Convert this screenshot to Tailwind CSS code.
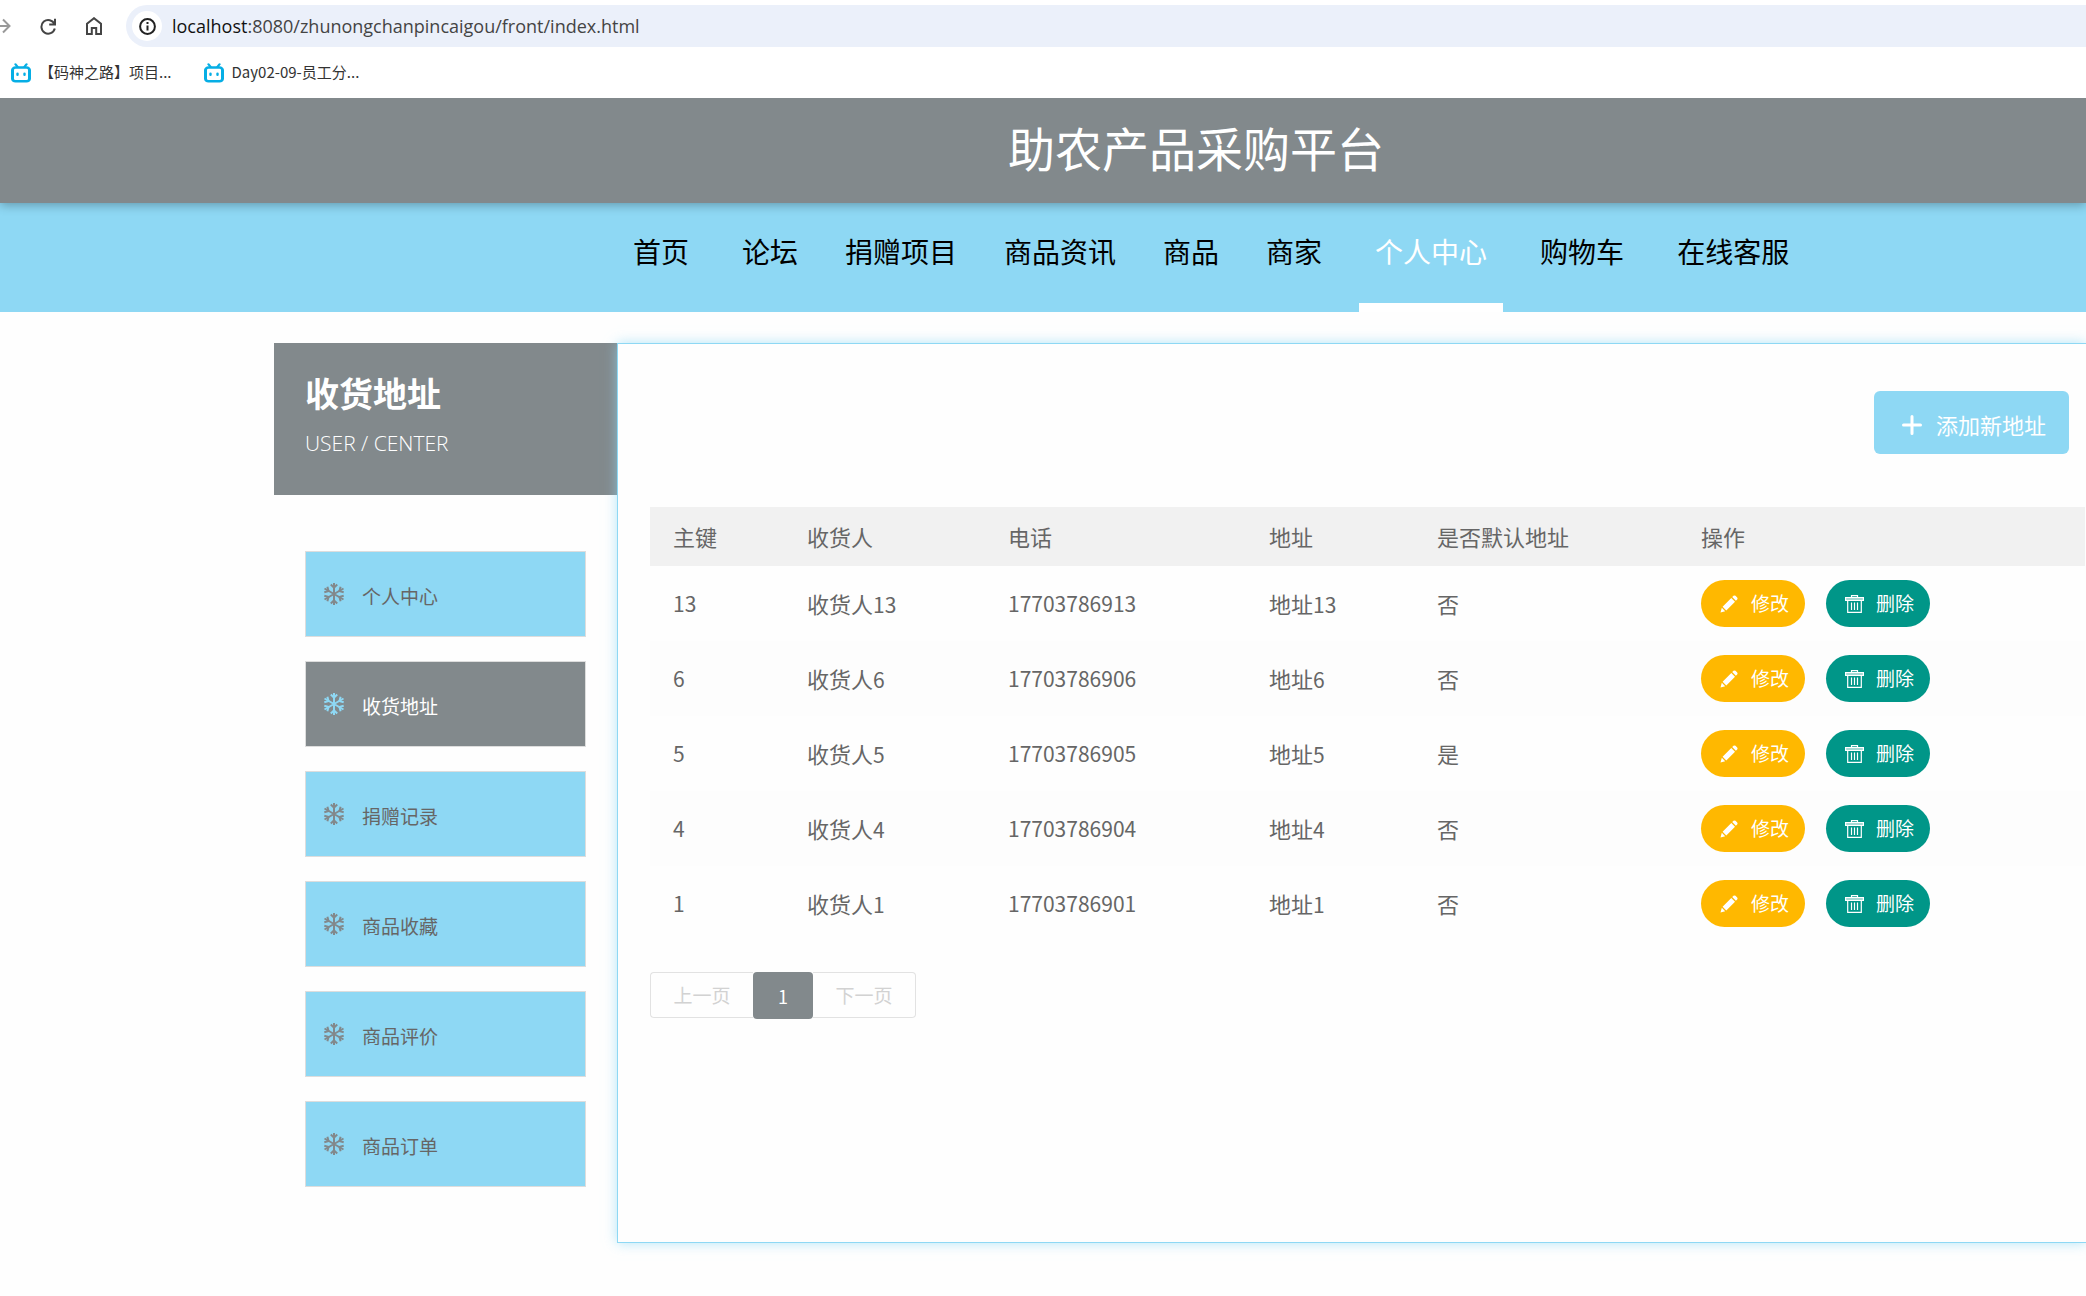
<!DOCTYPE html>
<html lang="zh-CN">
<head>
<meta charset="utf-8">
<title>助农产品采购平台</title>
<script src="https://cdn.jsdelivr.net/npm/@tailwindcss/browser@4"></script>
</head>
<body class="min-h-screen overflow-x-hidden bg-[#fefefe] font-['Noto_Sans_CJK_SC',sans-serif] text-[#666]">
<svg class="hidden">
  <symbol id="snow" viewBox="0 0 20 22"><g fill="none" stroke="currentColor" stroke-width="2"><path d="M10 0v22M.5 5.500l19 11M.5 16.500l19-11"/><path d="M6.800 1.500L10 4.700l3.200-3.200M6.800 20.500L10 17.300l3.200 3.200M.3 9.300l4.200-1.200L3.400 3.800M19.700 12.700l-4.200 1.200 1.100 4.300M.3 12.700l4.200 1.200-1.100 4.300M19.700 9.300l-4.200-1.200 1.100-4.300"/></g></symbol>
  <symbol id="pen" viewBox="0 0 18 18"><path fill="currentColor" d="M.5 17.500l1.300-4.700 3.400 3.400zM2.600 11.700L11.300 3l3.700 3.700-8.700 8.700zM12.200 2.100L13.500.8q1-.8 2 0l1.700 1.700q.8 1 0 2l-1.300 1.300z"/></symbol>
  <symbol id="trash" viewBox="0 0 19 18"><path fill="currentColor" fill-opacity=".65" d="M.5 2.500h18v3H.5z"/><path fill="none" stroke="currentColor" stroke-width="1.200" d="M6.500 2.500V.7h6v1.800M.6 2.500h17.800v3H.6zM2.700 5.500v11.800h13.600V5.500M6.500 7.500v7.500M9.500 7.500v7.500M12.500 7.500v7.500"/></symbol>
  <symbol id="tv" viewBox="0 0 20 24"><path fill="none" stroke="#06aee5" stroke-width="2.400" stroke-linecap="round" d="M4.500 1.500l2 3M15.500 1.500l-2 3"/><rect x="1.500" y="5.500" width="17" height="16.500" rx="3" fill="#fff" stroke="#06aee5" stroke-width="3"/><path stroke="#06aee5" stroke-width="2.400" stroke-linecap="round" d="M6.500 12.500v2M13.500 12.500v2"/></symbol>
</svg>

<div class="relative z-10 h-[98px] bg-white pt-[5px]">
  <div class="flex h-[42px] items-center">
    <button class="w-[10px]" aria-label="前进"><svg class="h-4 w-[11px]" viewBox="0 0 11 16" fill="none" stroke="#999" stroke-width="2"><path d="M0 8h9M3 1.500L9.500 8 3 14.500"/></svg></button>
    <button class="ml-[30px]" aria-label="刷新"><svg class="h-[17px] w-4" viewBox="0 0 16 17" fill="none" stroke="#444" stroke-width="2"><path d="M14.500 6.200A6.800 6.800 0 1 0 14.800 10.500M15 .8v5.700H9.200"/></svg></button>
    <button class="ml-[30px]" aria-label="主页"><svg class="h-[18px] w-4" viewBox="0 0 16 18" fill="none" stroke="#444" stroke-width="2"><path d="M1 6.800L8 1.200l7 5.600V17h-4.800v-6H5.800v6H1z"/></svg></button>
    <div class="ml-6 flex h-full min-w-0 flex-1 items-center rounded-l-full bg-[#ebf0fa] pl-[6px]">
      <span class="flex size-[30px] shrink-0 items-center justify-center rounded-full bg-white"><svg class="size-[17px]" viewBox="0 0 17 17" fill="none" stroke="#222" stroke-width="2"><circle cx="8.500" cy="8.500" r="7.400"/><path d="M8.500 7.500v5M8.500 4v2"/></svg></span>
      <p class="ml-[10px] font-['Open_Sans'] text-lg whitespace-nowrap text-[#444]"><span class="text-[#111]">localhost</span>:8080/zhunongchanpincaigou/front/index.html</p>
    </div>
  </div>
  <div class="flex h-[51px] items-center gap-8 pl-[11px] text-[15px] text-[#333]">
    <a href="#" class="flex items-center gap-2"><svg class="h-5 w-5" viewBox="0 0 20 24" preserveAspectRatio="none"><use href="#tv"/></svg>【码神之路】项目...</a>
    <a href="#" class="flex items-center gap-2"><svg class="h-5 w-5" viewBox="0 0 20 24" preserveAspectRatio="none"><use href="#tv"/></svg>Day02-09-员工分...</a>
  </div>
</div>

<header class="relative flex h-[105px] justify-center bg-[#82898c] pl-[306px] shadow-[0_2px_10px_rgba(0,0,0,0.3)]">
  <h1 class="text-[47px] leading-[97px] text-white">助农产品采购平台</h1>
</header>
<nav class="flex h-[109px] gap-[15px] bg-[#8ed8f4] pl-[617px] text-[28px] leading-[96px] whitespace-nowrap text-black">
  <a href="#" class="mr-[6px] px-4">首页</a>
  <a href="#" class="px-4">论坛</a>
  <a href="#" class="px-4">捐赠项目</a>
  <a href="#" class="px-4">商品资讯</a>
  <a href="#" class="px-4">商品</a>
  <a href="#" class="px-4">商家</a>
  <a href="#" class="mx-[6px] border-b-9 border-white px-4 text-white">个人中心</a>
  <a href="#" class="px-4">购物车</a>
  <a href="#" class="ml-[6px] px-4">在线客服</a>
</nav>

<div class="mt-[31px] flex pl-[274px]">
  <aside class="w-[343px] shrink-0">
    <div class="h-[152px] bg-[#82898c] pt-6 pl-[31px] text-white">
      <h2 class="text-[34px] leading-[52px] font-bold">收货地址</h2>
      <p class="font-['Open_Sans'] text-[21px] leading-[48px] font-light">USER / CENTER</p>
    </div>
    <ul class="mt-14 ml-[31px] flex w-[281px] flex-col gap-6 text-[19px]">
      <li><a href="#" class="flex h-[86px] items-center gap-[18px] border border-[#ddd] bg-[#8ed8f4] pl-[18px]"><svg class="h-[22px] w-5 text-[#82898c]"><use href="#snow"/></svg><span class="pt-1">个人中心</span></a></li>
      <li><a href="#" class="flex h-[86px] items-center gap-[18px] border border-[#ddd] bg-[#82898c] pl-[18px] text-white"><svg class="h-[22px] w-5 text-[#8ed8f4]"><use href="#snow"/></svg><span class="pt-1">收货地址</span></a></li>
      <li><a href="#" class="flex h-[86px] items-center gap-[18px] border border-[#ddd] bg-[#8ed8f4] pl-[18px]"><svg class="h-[22px] w-5 text-[#82898c]"><use href="#snow"/></svg><span class="pt-1">捐赠记录</span></a></li>
      <li><a href="#" class="flex h-[86px] items-center gap-[18px] border border-[#ddd] bg-[#8ed8f4] pl-[18px]"><svg class="h-[22px] w-5 text-[#82898c]"><use href="#snow"/></svg><span class="pt-1">商品收藏</span></a></li>
      <li><a href="#" class="flex h-[86px] items-center gap-[18px] border border-[#ddd] bg-[#8ed8f4] pl-[18px]"><svg class="h-[22px] w-5 text-[#82898c]"><use href="#snow"/></svg><span class="pt-1">商品评价</span></a></li>
      <li><a href="#" class="flex h-[86px] items-center gap-[18px] border border-[#ddd] bg-[#8ed8f4] pl-[18px]"><svg class="h-[22px] w-5 text-[#82898c]"><use href="#snow"/></svg><span class="pt-1">商品订单</span></a></li>
    </ul>
  </aside>

  <main class="min-w-0 flex-1 border-y border-l border-[#8ed8f4] bg-[#fefefe] pt-[47px] pr-px pb-[223px] pl-8 shadow-[0_0_12px_#8ed8f4aa]">
    <div class="flex justify-end pr-4">
      <button class="flex h-[63px] w-[195px] items-center gap-[14px] rounded-md bg-[#8ed8f4] pt-1 pl-7 text-[22px] whitespace-nowrap text-white"><svg class="size-5 shrink-0" viewBox="0 0 20 20" fill="none" stroke="currentColor" stroke-width="3" stroke-linecap="round"><path d="M10 1.500v17M1.500 10h17"/></svg>添加新地址</button>
    </div>
    <table class="mt-[53px] w-full table-fixed text-left text-[22px]">
      <colgroup><col class="w-[134px]"><col class="w-[201px]"><col class="w-[261px]"><col class="w-[168px]"><col class="w-[264px]"><col></colgroup>
      <thead><tr class="h-[59px] bg-[#f1f1f1]">
        <th class="pl-[23px] font-normal">主键</th><th class="pl-[23px] font-normal">收货人</th><th class="pl-[23px] font-normal">电话</th><th class="pl-[23px] font-normal">地址</th><th class="pl-[23px] font-normal">是否默认地址</th><th class="pl-[23px] font-normal">操作</th>
      </tr></thead>
      <tbody id="rows"></tbody>
    </table>
    <div class="mt-[31px] flex h-[47px] text-[19px]">
      <button disabled class="h-[46px] w-[103px] rounded-l-sm border border-r-0 border-[#e2e2e2] text-[#d2d2d2]">上一页</button>
      <button class="h-[47px] w-[60px] rounded-sm bg-[#82898c] text-lg text-white" aria-current="page">1</button>
      <button disabled class="h-[46px] w-[103px] rounded-r-sm border border-l-0 border-[#e2e2e2] text-[#d2d2d2]">下一页</button>
    </div>
  </main>
</div>

<script>
  const rows = [[13, '否'], [6, '否'], [5, '是'], [4, '否'], [1, '否']];
  document.getElementById('rows').innerHTML = rows.map(([id, isDefault]) => `
    <tr class="h-[75px] even:bg-[#fdfdfd]">
      <td class="pt-px pl-[23px] text-[21px]">${id}</td>
      <td class="pl-[23px]">收货人<span class="text-[21px]">${id}</span></td>
      <td class="pt-px pl-[23px] text-[21px]">177037869${String(id).padStart(2, '0')}</td>
      <td class="pl-[23px]">地址<span class="text-[21px]">${id}</span></td>
      <td class="pl-[23px]">${isDefault}</td>
      <td class="pl-[23px]"><div class="flex gap-[21px] text-[19px] text-white">
        <button class="flex h-[47px] w-[104px] items-center gap-[13px] rounded-full bg-[#ffb800] pl-[19px]"><svg class="size-[18px]"><use href="#pen"/></svg>修改</button>
        <button class="flex h-[47px] w-[104px] items-center gap-3 rounded-full bg-[#009688] pl-[19px]"><svg class="h-[18px] w-[19px]"><use href="#trash"/></svg>删除</button>
      </div></td>
    </tr>`).join('');
</script>
</body>
</html>
